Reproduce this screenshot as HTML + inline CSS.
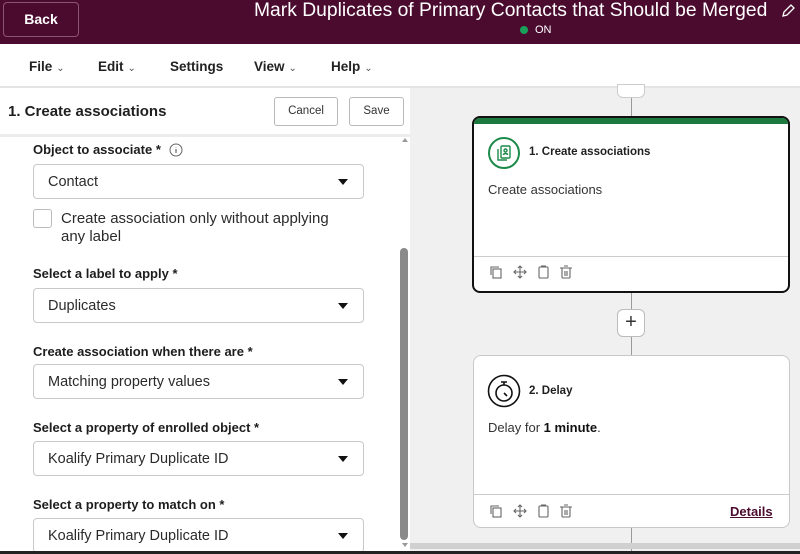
<!DOCTYPE html>
<html><head><style>
*{margin:0;padding:0;box-sizing:border-box}
body{width:800px;height:554px;overflow:hidden;font-family:"Liberation Sans",sans-serif;color:#1f1f1f;background:#fff;position:relative}
.a{position:absolute}
.hdr{left:0;top:0;width:800px;height:44px;background:#4b0b2f}
.back{left:3px;top:2px;width:76px;height:35px;border:1px solid #8a5572;border-radius:4px;color:#fff;font-weight:bold;font-size:14px;text-align:center;line-height:33px}
.title{left:254px;top:0px;color:#fff;font-size:19.3px;white-space:nowrap}
.on{left:520px;top:24px;color:#fff;font-size:11px}
.on i{display:inline-block;width:8px;height:8px;border-radius:50%;background:#1aa05a;margin-right:7px;vertical-align:-1px}
.menu{top:59px;font-size:13.5px;font-weight:bold;color:#222}
.menu span{font-weight:normal;font-size:10px;color:#555;margin-left:4px}
.sep{left:0;top:86px;width:800px;height:2px;background:#e4e4e4}
.canvas{left:410px;top:88px;width:390px;height:466px;background:#f0f0f0}
.ph{left:8px;top:103px;font-size:15px;font-weight:bold}
.btn{top:97px;height:29px;border:1px solid #b9b9b9;border-radius:3px;font-size:11.5px;text-align:center;line-height:27px;color:#333;background:#fff}
.psep{left:0;top:134px;width:410px;height:3px;background:#ececec}
.lbl{left:33px;font-size:13px;font-weight:bold;color:#1d1d1d}
.sel{left:33px;width:331px;height:35px;border:1px solid #c9c9c9;border-radius:4px;font-size:14.5px;padding-left:14px;line-height:35px;color:#2b2b2b;background:#fff}
.sel:after{content:"";position:absolute;right:15px;top:14px;border-left:5.5px solid transparent;border-right:5.5px solid transparent;border-top:6px solid #111}
.card{background:#fff;border-radius:8px}
.line{width:1px;background:#9a9a9a;left:631px}
</style></head><body>
<div class="a hdr"></div>
<div class="a back">Back</div>
<div class="a title">Mark Duplicates of Primary Contacts that Should be Merged</div>
<svg class="a" style="left:780px;top:3px" width="16" height="16" viewBox="0 0 16 16"><path d="M3 13l1-4 7-7 3 3-7 7z" fill="none" stroke="#fff" stroke-width="1.3"/></svg>
<div class="a on"><i></i>ON</div>
<div class="a menu" style="left:29px">File<span>&#8964;</span></div>
<div class="a menu" style="left:98px">Edit<span>&#8964;</span></div>
<div class="a menu" style="left:170px">Settings</div>
<div class="a menu" style="left:254px">View<span>&#8964;</span></div>
<div class="a menu" style="left:331px">Help<span>&#8964;</span></div>
<div class="a sep"></div>
<div class="a canvas"></div>
<div class="a ph">1. Create associations</div>
<div class="a btn" style="left:274px;width:64px">Cancel</div>
<div class="a btn" style="left:349px;width:55px">Save</div>
<div class="a psep"></div>
<div class="a" style="left:400px;top:248px;width:8px;height:292px;background:#8a8a8a;border-radius:4px"></div>
<div class="a" style="left:402px;top:138px;border-left:3px solid transparent;border-right:3px solid transparent;border-bottom:4px solid #999"></div>
<div class="a" style="left:402px;top:543px;border-left:3px solid transparent;border-right:3px solid transparent;border-top:4px solid #999"></div>

<div class="a lbl" style="top:142px">Object to associate * <svg style="vertical-align:-3px;margin-left:4px" width="14" height="14" viewBox="0 0 14 14"><circle cx="7" cy="7" r="6" fill="none" stroke="#666"/><path d="M7 6v4M7 4v.5" stroke="#666" stroke-width="1.2"/></svg></div>
<div class="a sel" style="top:164px">Contact</div>
<div class="a" style="left:33px;top:209px;width:19px;height:19px;border:1px solid #bbb;border-radius:3px"></div>
<div class="a" style="left:61px;top:210px;font-size:15px;line-height:18px;color:#2b2b2b;width:285px">Create association only without applying any label</div>
<div class="a lbl" style="top:266px">Select a label to apply *</div>
<div class="a sel" style="top:288px">Duplicates</div>
<div class="a lbl" style="top:344px">Create association when there are *</div>
<div class="a sel" style="top:364px">Matching property values</div>
<div class="a lbl" style="top:420px">Select a property of enrolled object *</div>
<div class="a sel" style="top:441px">Koalify Primary Duplicate ID</div>
<div class="a lbl" style="top:497px">Select a property to match on *</div>
<div class="a sel" style="top:518px">Koalify Primary Duplicate ID</div>

<div class="a line" style="top:88px;height:466px"></div>
<div class="a" style="left:617px;top:84px;width:28px;height:14px;background:#fff;border:1px solid #ccc;border-radius:0 0 6px 6px"></div>
<div class="a card" style="left:472px;top:116px;width:318px;height:177px;border:2px solid #111;overflow:hidden">
 <div style="height:6px;background:#1d7a3f"></div>
</div>
<div class="a" style="left:488px;top:137px;width:32px;height:32px;border:2px solid #1d8a4a;border-radius:50%"></div>
<svg class="a" style="left:495px;top:144px" width="18" height="18" viewBox="0 0 18 18" fill="none" stroke="#1d8a4a" stroke-width="1.4"><rect x="6" y="2" width="9" height="12" rx="1"/><path d="M3 5v11h9"/><circle cx="10.5" cy="6.5" r="1.5"/><path d="M8.5 11c0-2 4-2 4 0"/></svg>
<div class="a" style="left:529px;top:146px;font-size:11.5px;font-weight:bold">1. Create associations</div>
<div class="a" style="left:488px;top:182px;font-size:13px;color:#333">Create associations</div>
<div class="a" style="left:474px;top:256px;width:314px;height:1px;background:#ccc"></div>
<svg class="a" style="left:489px;top:264px" width="90" height="16" viewBox="0 0 90 16" fill="none" stroke="#666" stroke-width="1.1"><rect x="4" y="5" width="8" height="9"/><path d="M2 11V3h8"/><path d="M31 2v12M25 8h12M29 4l2-2 2 2M29 12l2 2 2-2M27 6l-2 2 2 2M35 6l2 2-2 2"/><rect x="50" y="3" width="9" height="11" rx="1"/><path d="M52.5 3v-1h4v1"/><rect x="73" y="4" width="8" height="10" rx="1"/><path d="M71 4h12M75 2h4M76 7v5M78 7v5"/></svg>

<div class="a" style="left:617px;top:309px;width:28px;height:28px;background:#fff;border:1px solid #bbb;border-radius:6px;text-align:center;line-height:25px;font-size:20px;color:#333">+</div>
<div class="a card" style="left:473px;top:355px;width:317px;height:173px;border:1px solid #c8c8c8"></div>
<svg class="a" style="left:487px;top:374px" width="34" height="34" viewBox="0 0 34 34" fill="none" stroke="#111" stroke-width="1.6"><circle cx="17" cy="17" r="15.5"/><circle cx="17" cy="19" r="8"/><path d="M14 8h6M17 8v3M17 19l3 3"/></svg>
<div class="a" style="left:529px;top:385px;font-size:11.5px;font-weight:bold">2. Delay</div>
<div class="a" style="left:488px;top:420px;font-size:13px;color:#333">Delay for <b style="color:#111">1 minute</b>.</div>
<div class="a" style="left:474px;top:494px;width:315px;height:1px;background:#ccc"></div>
<svg class="a" style="left:489px;top:503px" width="90" height="16" viewBox="0 0 90 16" fill="none" stroke="#666" stroke-width="1.1"><rect x="4" y="5" width="8" height="9"/><path d="M2 11V3h8"/><path d="M31 2v12M25 8h12M29 4l2-2 2 2M29 12l2 2 2-2M27 6l-2 2 2 2M35 6l2 2-2 2"/><rect x="50" y="3" width="9" height="11" rx="1"/><path d="M52.5 3v-1h4v1"/><rect x="73" y="4" width="8" height="10" rx="1"/><path d="M71 4h12M75 2h4M76 7v5M78 7v5"/></svg>
<div class="a" style="left:730px;top:504px;font-size:13px;font-weight:bold;color:#4b0b2f;text-decoration:underline">Details</div>
<div class="a" style="left:410px;top:543px;width:390px;height:6px;background:#d0d0d0"></div>
<div class="a" style="left:0;top:551px;width:800px;height:3px;background:#222"></div>
</body></html>
